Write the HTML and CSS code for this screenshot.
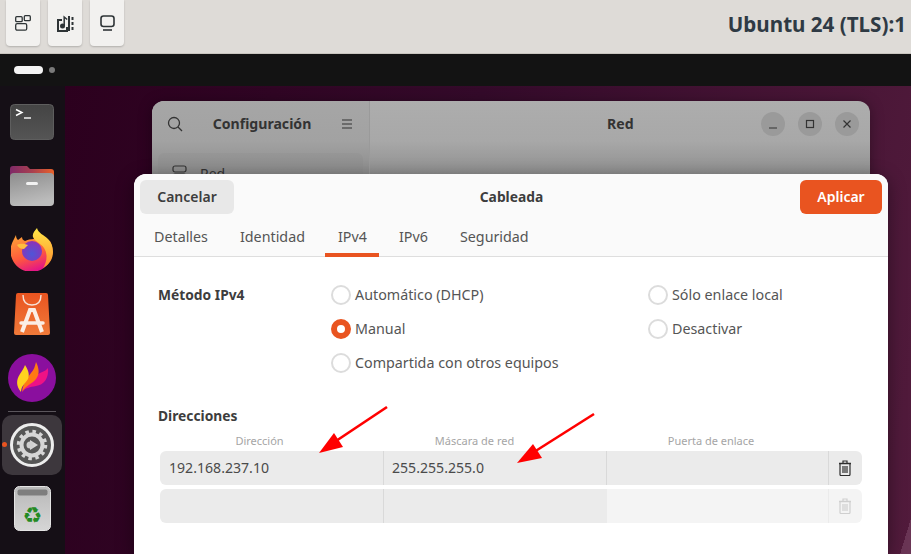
FILE: index.html
```html
<!DOCTYPE html>
<html lang="en">
<head>
  <meta charset="UTF-8" />
  <meta name="viewport" content="width=device-width, initial-scale=1.0" />
  <title>Ubuntu 24 (TLS):1</title>
  <link rel="stylesheet" href="styles.css">
</head>
<body>
  <header class="toolbar">
    <div class="tool-buttons">
      <button class="tool-btn"><svg width="16" height="16" viewBox="0 0 16 16" fill="none" stroke="#2e3436" stroke-width="1.3"><rect x="0.7" y="1.7" width="6.500" height="5" rx="1"/><rect x="9.300" y="0.700" width="6" height="5" rx="1"/><rect x="0.7" y="8.700" width="11" height="6.500" rx="1.500"/></svg></button>
      <button class="tool-btn"><svg width="17" height="17" viewBox="0 0 17 17" fill="none" stroke="#2e3436"><path d="M5 5H1v11h9V12" stroke-width="2"/><circle cx="5.500" cy="11" r="2.500" fill="#2e3436" stroke="none"/><path d="M7.200 11V2l3 2.500" stroke-width="1.500"/><path d="M12 1v15" stroke-width="2"/><path d="M15.500 2v3M15.500 7v3M15.500 12v3" stroke-width="2"/></svg></button>
      <button class="tool-btn"><svg width="15" height="16" viewBox="0 0 15 16" fill="none" stroke="#2e3436" stroke-width="1.600"><rect x="1" y="1" width="13" height="10.500" rx="2.500"/><path d="M3 15h9"/></svg></button>
    </div>
    <h1 class="vm-title">Ubuntu 24 (TLS):1</h1>
  </header>

  <div class="topbar">
    <span class="ws-pill"></span>
    <span class="ws-dot"></span>
  </div>

  <div class="desk">
    <nav class="dock">
      <svg class="dock-icon terminal" width="44" height="36" viewBox="0 0 44 36">
        <defs><linearGradient id="termBody" x1="0" x2="0" y1="0" y2="1"><stop offset="0" stop-color="#444"/><stop offset="1" stop-color="#555"/></linearGradient></defs>
        <rect x="0.5" y="0.5" width="43" height="35" rx="4" fill="url(#termBody)" stroke="#5e5e5e"/>
        <path d="M6 5.500l6 3-6 3" fill="none" stroke="#fff" stroke-width="1.400"/>
        <path d="M14 14h7" stroke="#fff" stroke-width="1.400"/>
      </svg>
      <svg class="dock-icon folder" width="44" height="40" viewBox="0 0 44 40">
        <defs>
          <linearGradient id="folderTab" x1="0" x2="1" y1="0" y2="0"><stop offset="0" stop-color="#7f2a68"/><stop offset="0.5" stop-color="#a83f50"/><stop offset="1" stop-color="#e9622a"/></linearGradient>
          <linearGradient id="folderBody" x1="0" x2="0.3" y1="0" y2="1"><stop offset="0" stop-color="#8d8d8d"/><stop offset="1" stop-color="#bcbcbc"/></linearGradient>
        </defs>
        <path d="M0 3a3 3 0 0 1 3-3h14l3 3h21a3 3 0 0 1 3 3v10H0z" fill="url(#folderTab)"/>
        <rect x="0" y="7" width="44" height="33" rx="4" fill="url(#folderBody)"/>
        <rect x="16" y="16" width="12" height="3" rx="1.500" fill="#f2f2f2"/>
      </svg>
      <svg class="dock-icon firefox" width="42" height="43" viewBox="0 0 42 43">
        <defs>
          <linearGradient id="foxBody" x1="0.100" x2="0.500" y1="0" y2="1"><stop offset="0" stop-color="#ffa436"/><stop offset="0.6" stop-color="#ff5a3c"/><stop offset="1" stop-color="#e31587"/></linearGradient>
          <linearGradient id="foxTail" x1="0" x2="0" y1="0" y2="1"><stop offset="0" stop-color="#ffe847"/><stop offset="1" stop-color="#ff8a2e"/></linearGradient>
          <radialGradient id="foxGlobe" cx="0.500" cy="0.650" r="0.600"><stop offset="0" stop-color="#4f55d8"/><stop offset="1" stop-color="#8a34b8"/></radialGradient>
        </defs>
        <path d="M5 7c0 3 1 4 2 5l4-3c0 2 1 3 3 4 4-2 10-3 14-1l11 1a21 21 0 1 1-37 0c1-2 2-4 3-6z" fill="url(#foxBody)"/>
        <path d="M26 0c1 5 7 7 11 11 4 4 5 9 5 13 0 7-4 13-10 16 4-6 5-14 1-20-3-5-9-6-11-11-1-4 2-6 4-9z" fill="url(#foxTail)"/>
        <circle cx="21" cy="23" r="10" fill="url(#foxGlobe)"/>
        <path d="M6 17c4-2 7-1 11 0l-4 4c-3 0-5-1-7-4z" fill="#ffbd3f"/>
      </svg>
      <svg class="dock-icon store" width="36" height="42" viewBox="0 0 36 42">
        <defs><linearGradient id="storeBag" x1="0" x2="0" y1="0" y2="1"><stop offset="0" stop-color="#e95420"/><stop offset="1" stop-color="#f07a3a"/></linearGradient></defs>
        <path d="M2 2a2 2 0 0 1 2-2h28a2 2 0 0 1 2 2l2 38a2 2 0 0 1-2 2H2a2 2 0 0 1-2-2z" fill="url(#storeBag)"/>
        <path d="M9 2c0 7 4 10 9 10s9-3 9-10" fill="none" stroke="#f6e3d8" stroke-width="1.400"/>
        <path d="M8 39l8-22h4l8 22" fill="none" stroke="#fbeee6" stroke-width="4"/>
        <path d="M7 30h22" stroke="#fbeee6" stroke-width="3.500" stroke-linecap="round"/>
      </svg>
      <svg class="dock-icon flame" width="48" height="48" viewBox="0 0 48 48">
        <circle cx="24" cy="24" r="24" fill="#8a0f9e"/>
        <path d="M14 38c4-8 8-11 13-16 5-4 10-4 13-8 1 10-4 17-12 18-6 1-11 2-14 6z" fill="#ee1285"/>
        <path d="M14 38c1-8 5-14 9-19 3-3 4-7 5-11 3 6 4 12 0 17-4 5-10 6-14 13z" fill="#ff7a12"/>
        <path d="M13 38c-5-6-5-12-1-18 2-3 4-6 5-9 3 5 5 9 3 14-3 5-7 7-7 13z" fill="#ffd21f"/>
      </svg>
      <span class="dock-sep"></span>
      <div class="dock-active">
        <span class="run-dot"></span>
        <svg width="44" height="44" viewBox="0 0 44 44">
          <circle cx="22" cy="22" r="20.500" fill="#565656" stroke="#ededed" stroke-width="3"/>
          <circle cx="22" cy="22" r="10.500" fill="none" stroke="#d6d6d6" stroke-width="4"/>
          <circle cx="22" cy="22" r="13.500" fill="none" stroke="#d6d6d6" stroke-width="3.500" stroke-dasharray="3.500 3.570"/>
          <path d="M20 17l8 5-8 5z" fill="#d6d6d6"/>
          <circle cx="20" cy="22" r="3.500" fill="#cfcfcf"/>
        </svg>
      </div>
      <svg class="dock-icon bin" width="37" height="45" viewBox="0 0 37 45">
        <defs><linearGradient id="binBody" x1="0" x2="0" y1="0" y2="1"><stop offset="0" stop-color="#b8b8b8"/><stop offset="1" stop-color="#d6d6d6"/></linearGradient></defs>
        <rect x="0.500" y="0.500" width="36" height="44" rx="5" fill="url(#binBody)" stroke="#e4e4e4"/>
        <rect x="3.500" y="3.500" width="30" height="6" rx="2" fill="#7e7e7e"/>
        <text class="recycle" x="18.500" y="37" text-anchor="middle">♻</text>
      </svg>
    </nav>

    <main class="wall">
      <section class="bg-window">
        <div class="bg-sidebar">
          <div class="bg-sidebar-head">
            <svg width="16" height="16" viewBox="0 0 16 16" fill="none" stroke="#333" stroke-width="1.300"><circle cx="7" cy="7" r="5.500"/><path d="M11 11l4 4"/></svg>
            <span class="bg-title">Configuración</span>
            <svg width="12" height="10" viewBox="0 0 12 10" stroke="#333" stroke-width="1.200"><path d="M1 1h10M1 5h10M1 9h10"/></svg>
          </div>
          <div class="bg-row">
            <svg width="16" height="16" viewBox="0 0 16 16" fill="none" stroke="#333" stroke-width="1.200"><rect x="1" y="1" width="13" height="6" rx="2"/><rect x="1" y="9" width="13" height="6" rx="2"/></svg>
            <span>Red</span>
          </div>
        </div>
        <div class="bg-content">
          <span class="bg-title bg-content-title">Red</span>
          <div class="win-controls">
            <span class="win-btn"><svg width="10" height="10" viewBox="0 0 10 10" stroke="#333" stroke-width="1.200"><path d="M1 9h8"/></svg></span>
            <span class="win-btn"><svg width="10" height="10" viewBox="0 0 10 10" fill="none" stroke="#333" stroke-width="1.200"><rect x="1.500" y="1.500" width="7" height="7"/></svg></span>
            <span class="win-btn"><svg width="10" height="10" viewBox="0 0 10 10" stroke="#333" stroke-width="1.200"><path d="M1.500 1.500l7 7M8.500 1.500l-7 7"/></svg></span>
          </div>
        </div>
      </section>

      <section class="dialog">
        <div class="dialog-head">
          <div class="dialog-actions">
            <button class="btn btn-cancel">Cancelar</button>
            <span class="dialog-title">Cableada</span>
            <button class="btn btn-apply">Aplicar</button>
          </div>
          <div class="tabs">
            <span class="tab">Detalles</span>
            <span class="tab">Identidad</span>
            <span class="tab tab-active">IPv4</span>
            <span class="tab">IPv6</span>
            <span class="tab">Seguridad</span>
          </div>
        </div>
        <div class="dialog-body">
          <div class="method">
            <span class="strong-label method-label">Método IPv4</span>
            <div class="method-options">
              <label class="radio"><span class="radio-mark"></span><span class="radio-text">Automático (DHCP)</span></label>
              <label class="radio"><span class="radio-mark"></span><span class="radio-text">Sólo enlace local</span></label>
              <label class="radio"><span class="radio-mark radio-on"></span><span class="radio-text">Manual</span></label>
              <label class="radio"><span class="radio-mark"></span><span class="radio-text">Desactivar</span></label>
              <label class="radio"><span class="radio-mark"></span><span class="radio-text">Compartida con otros equipos</span></label>
            </div>
          </div>
          <div class="strong-label addr-heading">Direcciones</div>
          <div class="addr-grid addr-labels">
            <span>Dirección</span>
            <span>Máscara de red</span>
            <span>Puerta de enlace</span>
            <span></span>
          </div>
          <div class="addr-grid addr-row">
            <span class="cell">192.168.237.10</span>
            <span class="cell">255.255.255.0</span>
            <span class="cell"></span>
            <span class="cell cell-icon">
              <svg width="14" height="16" viewBox="0 0 14 16" fill="none" stroke="#2e2e2e" stroke-width="1.200"><path d="M1 3.500h12" stroke-width="1.600"/><path d="M5 3V1h4v2"/><path d="M2 4v10.500a1 1 0 0 0 1 1h8a1 1 0 0 0 1-1V4"/><path d="M5 6v7M7 6v7M9 6v7"/></svg>
            </span>
          </div>
          <div class="addr-grid addr-row">
            <span class="cell"></span>
            <span class="cell"></span>
            <span class="cell cell-off"></span>
            <span class="cell cell-off cell-icon">
              <svg width="14" height="16" viewBox="0 0 14 16" fill="none" stroke="#cfcfcf" stroke-width="1.200"><path d="M1 3.500h12" stroke-width="1.600"/><path d="M5 3V1h4v2"/><path d="M2 4v10.500a1 1 0 0 0 1 1h8a1 1 0 0 0 1-1V4"/><path d="M5 6v7M7 6v7M9 6v7"/></svg>
            </span>
          </div>
        </div>
      </section>
    </main>
  </div>

  <svg class="arrows" width="911" height="554" viewBox="0 0 911 554">
    <path d="M387 407L336 441" stroke="#ff0000" stroke-width="2.600"/>
    <path d="M319 453L334 433L343 447z" fill="#ff0000"/>
    <path d="M594 414L534 452" stroke="#ff0000" stroke-width="2.600"/>
    <path d="M517 463L533 444L542 458z" fill="#ff0000"/>
  </svg>
</body>
</html>
```

FILE: styles.css
```css
* {
  box-sizing: border-box;
}
html, body {
  margin: 0;
  height: 554px;
  overflow: hidden;
}
body {
  display: flex;
  flex-direction: column;
  font-family: "Noto Sans", "Open Sans", sans-serif;
  color: #3d3d3d;
  background: #131313;
}
.toolbar {
  height: 54px;
  flex: none;
  display: flex;
  justify-content: space-between;
  background: #dedbd7;
  border-bottom: 1px solid #c9c5bf;
  padding: 0 5px 0 6px;
}
.tool-buttons {
  display: flex;
  gap: 8px;
}
.tool-btn {
  width: 34px;
  height: 46px;
  padding: 0;
  display: flex;
  align-items: center;
  justify-content: center;
  background: #f2f1ef;
  border: none;
  border-radius: 0 0 4px 4px;
  box-shadow: 0 1px 2px rgba(0, 0, 0, 0.2);
}
.vm-title {
  margin: 0;
  font-size: 20.6px;
  line-height: 48px;
  font-weight: 700;
  color: #2f3a44;
}
.topbar {
  height: 32px;
  flex: none;
  display: flex;
  align-items: center;
  gap: 6px;
  padding-left: 14px;
  background: #131313;
}
.ws-pill {
  width: 29px;
  height: 8px;
  border-radius: 4px;
  background: #f4f4f4;
}
.ws-dot {
  width: 6px;
  height: 6px;
  border-radius: 50%;
  background: #7a7a7a;
}
.desk {
  flex: 1;
  display: flex;
  min-height: 0;
}
.dock {
  width: 65px;
  flex: none;
  display: flex;
  flex-direction: column;
  align-items: center;
  background: #150f16;
  padding: 18px 1px 0 0;
}
.dock-icon {
  display: block;
  flex: none;
}
.folder {
  margin-top: 26px;
}
.firefox {
  margin-top: 22px;
}
.store {
  margin-top: 22px;
}
.flame {
  margin-top: 19px;
}
.dock-sep {
  width: 48px;
  height: 1px;
  margin-top: 9px;
  background: #5b565c;
  flex: none;
}
.dock-active {
  position: relative;
  width: 60px;
  height: 60px;
  flex: none;
  margin-top: 3px;
  display: flex;
  align-items: center;
  justify-content: center;
  background: #3d373d;
  border-radius: 10px;
}
.run-dot {
  position: absolute;
  left: 0;
  top: 27px;
  width: 5px;
  height: 5px;
  border-radius: 50%;
  background: #e95420;
}
.bin {
  margin-top: 11px;
}
.recycle {
  font-family: "DejaVu Sans", sans-serif;
  font-size: 22px;
  fill: #238a23;
}
.wall {
  position: relative;
  flex: 1;
  background:
    linear-gradient(107deg, transparent 98.9%, #6a3555 98.9%),
    linear-gradient(100deg, #2c001e 0%, #340a2a 45%, #521b3c 100%);
}
.bg-window {
  position: absolute;
  left: 87px;
  top: 15px;
  width: 718px;
  height: 300px;
  display: flex;
  border-radius: 12px 12px 0 0;
  overflow: hidden;
  background: linear-gradient(#adadad 0%, #a8a8a8 40px, #8f8f8f 73px);
  box-shadow: 0 2px 14px rgba(0, 0, 0, 0.35);
}
.bg-sidebar {
  width: 218px;
  flex: none;
  border-right: 1px solid #9a9a9a;
  background: linear-gradient(#a6a6a6 0%, #a2a2a2 40px, #8c8c8c 73px);
  padding: 0 6px;
}
.bg-sidebar-head {
  height: 46px;
  display: flex;
  align-items: center;
  justify-content: space-between;
  padding: 0 10px 0 9px;
}
.bg-title {
  font-size: 14.1px;
  font-weight: 700;
  color: #333;
  margin-bottom: 2px;
}
.bg-row {
  margin-top: 6px;
  height: 40px;
  display: flex;
  align-items: center;
  gap: 12px;
  padding-left: 14px;
  border-radius: 6px;
  background: linear-gradient(#969696, #7f7f7f);
  font-size: 14px;
  color: #333;
}
.bg-content {
  flex: 1;
  position: relative;
  height: 46px;
  display: flex;
  align-items: center;
  justify-content: flex-end;
  padding-right: 11px;
}
.bg-content-title {
  position: absolute;
  left: 237px;
}
.win-controls {
  display: flex;
  gap: 13px;
}
.win-btn {
  width: 24px;
  height: 24px;
  border-radius: 50%;
  background: #9a9a9a;
  display: flex;
  align-items: center;
  justify-content: center;
}
.dialog {
  position: absolute;
  left: 69px;
  top: 88px;
  width: 754px;
  height: 380px;
  border-radius: 12px 12px 0 0;
  overflow: hidden;
  background: #fff;
  box-shadow: 0 4px 18px rgba(0, 0, 0, 0.4);
}
.dialog-head {
  height: 83px;
  background: #fafafa;
  border-bottom: 1px solid #dedede;
  padding: 6px 6px 0;
}
.dialog-actions {
  display: flex;
  justify-content: space-between;
  align-items: center;
}
.btn {
  height: 34px;
  border: none;
  border-radius: 6px;
  font-family: inherit;
  font-size: 14px;
  font-weight: 600;
  padding: 0 0 2px;
}
.btn-cancel {
  width: 94px;
  background: #e8e8e8;
  color: #3d3d3d;
}
.btn-apply {
  width: 82px;
  background: #e95420;
  color: #fff;
}
.dialog-title {
  font-size: 13.8px;
  font-weight: 700;
  color: #3d3d3d;
  margin: 0 11px 2px 0;
}
.tabs {
  display: flex;
  gap: 6px;
  height: 43px;
  padding-left: 1px;
}
.tab {
  padding: 13px 13px 0;
  height: 43px;
  font-size: 14.3px;
  color: #555;
}
.tab-active {
  margin-left: 1px;
  width: 54px;
  border-bottom: 4px solid #e95420;
}
.tab-active + .tab {
  margin-left: 1px;
}
.dialog-body {
  padding: 0 26px 0 24px;
}
.strong-label {
  font-size: 13.8px;
  font-weight: 700;
  color: #3d3d3d;
}
.method {
  display: flex;
  padding-top: 27px;
}
.method-label {
  width: 173px;
  flex: none;
  line-height: 34px;
  margin-top: -6px;
}
.method-options {
  display: grid;
  grid-template-columns: 317px 1fr;
  grid-auto-rows: 34px;
  margin-top: -6px;
}
.radio {
  display: flex;
  align-items: center;
  gap: 4px;
  font-size: 14.3px;
  color: #555;
}
.radio-text {
  margin-bottom: 2px;
}
.radio-mark {
  width: 20px;
  height: 20px;
  border-radius: 50%;
  border: 2px solid #dcdcdc;
  background: #fff;
  flex: none;
}
.radio-on {
  border: 6px solid #e95420;
}
.addr-heading {
  margin-top: 26px;
  line-height: 20px;
}
.addr-grid {
  display: grid;
  grid-template-columns: 223px 223px 222px 34px;
  margin-left: 2px;
}
.addr-labels {
  height: 22px;
  align-items: center;
  text-align: center;
  font-size: 11px;
  color: #a5a5a5;
  margin-top: 3px;
}
.addr-labels span:nth-child(1) {
  padding-right: 24px;
}
.addr-labels span:nth-child(2) {
  padding-right: 40px;
}
.addr-labels span:nth-child(3) {
  padding-right: 12px;
}
.addr-row {
  height: 34px;
  margin-bottom: 4px;
  border-radius: 6px;
  overflow: hidden;
}
.cell {
  display: flex;
  align-items: center;
  padding: 0 0 2px 8px;
  font-size: 14.1px;
  color: #4a4a4a;
  background: #ebebeb;
  border-left: 1px solid #d9d9d9;
}
.cell:first-child {
  border-left: none;
  padding-left: 9px;
}
.cell-off {
  background: #f4f4f4;
  border-left-color: #ebebeb;
}
.cell-icon {
  padding: 0 2px 0 0;
  justify-content: center;
}
.arrows {
  position: absolute;
  left: 0;
  top: 0;
  pointer-events: none;
}
```
